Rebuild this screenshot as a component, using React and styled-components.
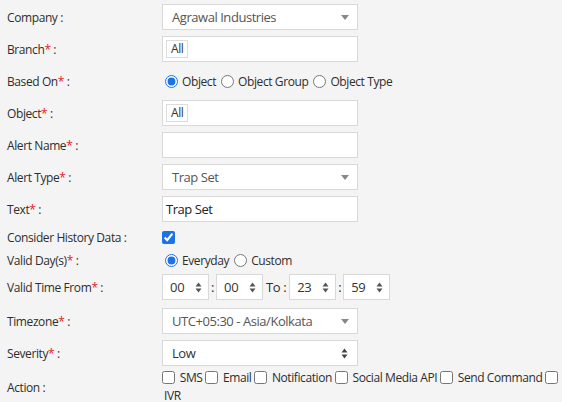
import React from "react";
import styled, { createGlobalStyle } from "styled-components";

const Global = createGlobalStyle`
  html, body { margin: 0; padding: 0; background: #f4f4f4; }
  body { font-family: "Open Sans", "Liberation Sans", sans-serif; font-size: 12px; color: #2e2e2e; letter-spacing: -0.4px; }
  * { box-sizing: border-box; }
`;

const Form = styled.div`
  display: flex;
  flex-direction: column;
  padding: 1px 0 0 7px;
  width: 562px;
  overflow: hidden;
`;

const Row = styled.div`
  display: grid;
  grid-template-columns: 155px 1fr;
  align-items: center;
  padding: ${(p) => (p.$flat ? 0 : 3)}px 0;
  margin-top: ${(p) => p.$mt || 0}px;
  min-height: 32px;
  ${(p) => p.$h && `height: ${p.$h}px; min-height: 0;`}
`;

const Label = styled.div`
  white-space: nowrap;
`;

const Star = styled.span`
  color: #e0201f;
`;

const Box = styled.div`
  width: 196px;
  height: 26px;
  border: 1px solid #d9d9d9;
  background: #fff;
  display: flex;
  align-items: center;
  padding: 0 ${(p) => (p.$tag ? 3 : 9)}px 0 ${(p) => (p.$tag ? 3 : p.$pl || 9)}px;
  color: ${(p) => p.$color || "#555"};
  font-size: 13px;
  letter-spacing: -0.45px;
  justify-content: space-between;
`;

const Tag = styled.span`
  border: 1px solid #ddd;
  padding: 0 4px;
  line-height: 16px;
  font-size: 12px;
  color: #333;
  background: #fff;
`;

const Caret = styled.span`
  width: 0;
  height: 0;
  border-left: 4px solid transparent;
  border-right: 4px solid transparent;
  border-top: 5px solid #888;
  margin-right: -1px;
`;

const Options = styled.div`
  display: flex;
  align-items: center;
  flex-wrap: wrap;
  line-height: 17px;
`;

const Opt = styled.label`
  display: inline-flex;
  align-items: center;
  white-space: nowrap;
  margin-right: 2px;
`;

const Radio = styled.input.attrs({ type: "radio" })`
  width: 13px;
  height: 13px;
  margin: 0 4px 0 3px;
  accent-color: #1a73e8;
`;

const Check = styled.input.attrs({ type: "checkbox" })`
  width: 13px;
  height: 13px;
  margin: 0 ${(p) => (p.$inline ? 0 : 4)}px 0 0;
  vertical-align: -2px;
  accent-color: #1a73e8;
`;

const TimeWrap = styled.div`
  display: flex;
  align-items: center;
`;

const Spin = styled.div`
  width: 47px;
  height: 26px;
  border: 1px solid #d9d9d9;
  background: #fff;
  display: flex;
  align-items: center;
  justify-content: space-between;
  padding: 0 6px 0 7px;
  font-size: 13px;
  letter-spacing: -0.3px;
  color: #333;
`;

const Sep = styled.span`
  padding: 0 ${(p) => p.$p ?? 2}px;
  font-size: 13px;
  letter-spacing: -0.4px;
`;

const ActionText = styled.div`
  width: 406px;
  line-height: 18px;
`;

const ActOpt = styled.span`
  margin-left: 2px;
`;

const UpDown = ({ color = "#555" }) => (
  <svg width="7" height="11" viewBox="0 0 7 11">
    <path d="M3.5 0.5 L6.5 4.5 L0.5 4.5 Z" fill={color} />
    <path d="M3.5 10.5 L6.5 6.5 L0.5 6.5 Z" fill={color} />
  </svg>
);

const L = ({ children, req }) => (
  <Label>
    {children}
    {req && <Star>*</Star>} :
  </Label>
);

const actions = ["SMS", "Email", "Notification", "Social Media API", "Send Command", "IVR"];

export default function App() {
  return (
    <>
      <Global />
      <Form>
        <Row>
          <L>Company</L>
          <Box>
            Agrawal Industries <Caret />
          </Box>
        </Row>
        <Row>
          <L req>Branch</L>
          <Box $tag>
            <Tag>All</Tag>
          </Box>
        </Row>
        <Row>
          <L req>Based On</L>
          <Options>
            <Opt><Radio name="b" defaultChecked />Object</Opt>
            <Opt><Radio name="b" />Object Group</Opt>
            <Opt><Radio name="b" />Object Type</Opt>
          </Options>
        </Row>
        <Row>
          <L req>Object</L>
          <Box $tag>
            <Tag>All</Tag>
          </Box>
        </Row>
        <Row>
          <L req>Alert Name</L>
          <Box />
        </Row>
        <Row>
          <L req>Alert Type</L>
          <Box>
            Trap Set <Caret />
          </Box>
        </Row>
        <Row>
          <L req>Text</L>
          <Box $color="#222" $pl={3}>Trap Set</Box>
        </Row>
        <Row $h={24}>
          <L>Consider History Data</L>
          <Options>
            <Check defaultChecked />
          </Options>
        </Row>
        <Row $h={22}>
          <L req>Valid Day(s)</L>
          <Options>
            <Opt><Radio name="d" defaultChecked />Everyday</Opt>
            <Opt><Radio name="d" />Custom</Opt>
          </Options>
        </Row>
        <Row>
          <L req>Valid Time From</L>
          <TimeWrap>
            <Spin>00 <UpDown /></Spin>
            <Sep>:</Sep>
            <Spin>00 <UpDown /></Spin>
            <Sep $p={3}>To :</Sep>
            <Spin>23 <UpDown /></Spin>
            <Sep>:</Sep>
            <Spin>59 <UpDown /></Spin>
          </TimeWrap>
        </Row>
        <Row $mt={2}>
          <L req>Timezone</L>
          <Box>
            UTC+05:30 - Asia/Kolkata <Caret />
          </Box>
        </Row>
        <Row>
          <L req>Severity</L>
          <Box $color="#333">
            Low <UpDown color="#444" />
          </Box>
        </Row>
        <Row $flat>
          <L>Action</L>
          <ActionText>
            {actions.map((a) => (
              <React.Fragment key={a}>
                <Check $inline />{" "}
                <ActOpt>{a}</ActOpt>{" "}
              </React.Fragment>
            ))}
          </ActionText>
        </Row>
      </Form>
    </>
  );
}
